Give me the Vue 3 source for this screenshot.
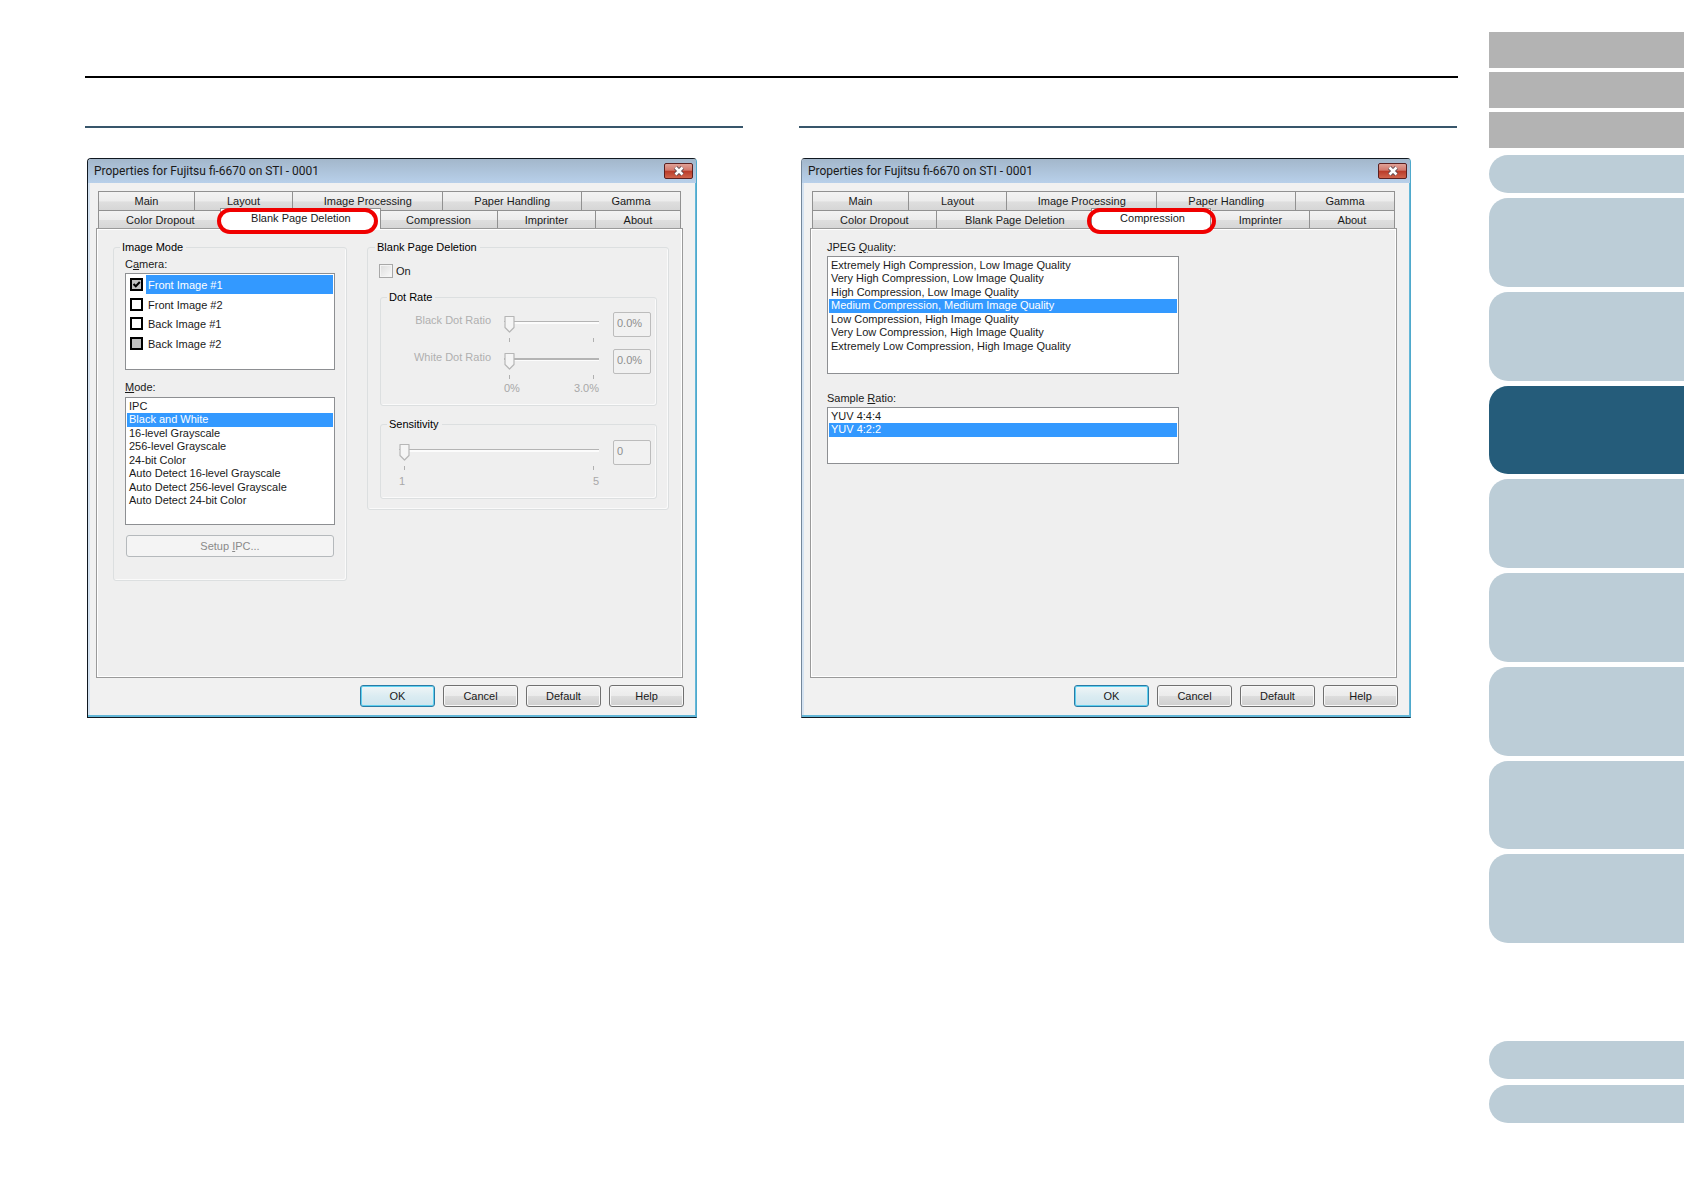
<script setup>
import { ref } from 'vue'

const topTabs = [
  { name: 'Main', size: 96 },
  { name: 'Layout', size: 98 },
  { name: 'Image Processing', size: 151 },
  { name: 'Paper Handling', size: 139 },
  { name: 'Gamma', size: 99 },
]
const bottomTabs = [
  { name: 'Color Dropout', size: 124 },
  { name: 'Blank Page Deletion', size: 158 },
  { name: 'Compression', size: 118 },
  { name: 'Imprinter', size: 98 },
  { name: 'About', size: 85 },
]
const dialogs = [
  { id: 'blank', active: 'Blank Page Deletion' },
  { id: 'compression', active: 'Compression' },
]
const cameras = ref([
  { name: 'Front Image #1', checked: true, grey: true, selected: true },
  { name: 'Front Image #2', checked: false },
  { name: 'Back Image #1', checked: false },
  { name: 'Back Image #2', checked: false, grey: true },
])
const modes = [
  'IPC',
  'Black and White',
  '16-level Grayscale',
  '256-level Grayscale',
  '24-bit Color',
  'Auto Detect 16-level Grayscale',
  'Auto Detect 256-level Grayscale',
  'Auto Detect 24-bit Color',
]
const qualities = [
  'Extremely High Compression, Low Image Quality',
  'Very High Compression, Low Image Quality',
  'High Compression, Low Image Quality',
  'Medium Compression, Medium Image Quality',
  'Low Compression, High Image Quality',
  'Very Low Compression, High Image Quality',
  'Extremely Low Compression, High Image Quality',
]
const ratios = ['YUV 4:4:4', 'YUV 4:2:2']
const mode = ref('Black and White')
const quality = ref('Medium Compression, Medium Image Quality')
const ratio = ref('YUV 4:2:2')
const dots = ['Black Dot Ratio', 'White Dot Ratio']
</script>

<template>
  <div class="page">
    <main class="content">
      <hr class="rule" />
      <div class="columns">
        <section v-for="d in dialogs" :key="d.id" class="column">
          <div class="dialog" :class="d.id">
            <header class="titlebar">
              <span class="title">Properties for Fujitsu fi-6670 on STI - 0001</span>
              <button class="close" type="button" aria-label="Close">
                <svg width="14" height="12" viewBox="0 0 14 12">
                  <path d="M3.5 2.5 10.5 9.5M10.5 2.5 3.5 9.5" stroke="#5a4a50" stroke-width="4.4" />
                  <path d="M3.5 2.5 10.5 9.5M10.5 2.5 3.5 9.5" stroke="#fff" stroke-width="2.6" />
                </svg>
              </button>
            </header>

            <div class="tabs" role="tablist">
              <div class="tabrow">
                <button v-for="t in topTabs" :key="t.name" class="tab" type="button" role="tab" :style="{ flexGrow: t.size }">
                  {{ t.name }}
                </button>
              </div>
              <div class="tabrow lower">
                <button
                  v-for="t in bottomTabs"
                  :key="t.name"
                  class="tab"
                  :class="{ active: t.name === d.active }"
                  type="button"
                  role="tab"
                  :style="{ flexGrow: t.size }"
                >
                  <span class="tabtext">{{ t.name }}</span>
                  <span v-if="t.name === d.active" class="ring"></span>
                </button>
              </div>
            </div>

            <div v-if="d.id === 'blank'" class="panel blank-panel">
              <fieldset class="group image-mode">
                <legend>Image Mode</legend>
                <div class="label">C<u>a</u>mera:</div>
                <ul class="cameras">
                  <li v-for="c in cameras" :key="c.name">
                    <label :class="{ selected: c.selected }">
                      <input v-model="c.checked" type="checkbox" :class="{ grey: c.grey }" />
                      <span>{{ c.name }}</span>
                    </label>
                  </li>
                </ul>
                <label class="label mode-label" for="mode"><u>M</u>ode:</label>
                <select id="mode" v-model="mode" class="list mode-list" size="8">
                  <option v-for="m in modes" :key="m">{{ m }}</option>
                </select>
                <button class="setup" type="button" disabled>Setup <u>I</u>PC...</button>
              </fieldset>

              <fieldset class="group deletion">
                <legend>Blank Page Deletion</legend>
                <label class="switch"><input type="checkbox" /><span>On</span></label>

                <fieldset class="group inner">
                  <legend>Dot Rate</legend>
                  <div v-for="(name, i) in dots" :key="name" class="slide-row">
                    <label :for="'dot' + i">{{ name }}</label>
                    <div class="slider">
                      <input :id="'dot' + i" type="range" min="0" max="3" value="0" disabled />
                      <div class="ticks"><i></i><i></i></div>
                    </div>
                    <input class="value" type="text" value="0.0%" :aria-label="name" disabled />
                  </div>
                  <div class="scale"><span>0%</span><span>3.0%</span></div>
                </fieldset>

                <fieldset class="group inner sensitivity">
                  <legend>Sensitivity</legend>
                  <div class="slide-row">
                    <div class="slider wide">
                      <input type="range" min="1" max="5" value="1" aria-label="Sensitivity" disabled />
                      <div class="ticks"><i></i><i></i></div>
                    </div>
                    <input class="value" type="text" value="0" aria-label="Sensitivity" disabled />
                  </div>
                  <div class="scale wide"><span>1</span><span>5</span></div>
                </fieldset>
              </fieldset>
            </div>

            <div v-else class="panel compression-panel">
              <label class="label" for="quality">JPEG <u>Q</u>uality:</label>
              <select id="quality" v-model="quality" class="list quality-list" size="7">
                <option v-for="q in qualities" :key="q">{{ q }}</option>
              </select>
              <label class="label ratio-label" for="ratio">Sample <u>R</u>atio:</label>
              <select id="ratio" v-model="ratio" class="list ratio-list" size="2">
                <option v-for="r in ratios" :key="r">{{ r }}</option>
              </select>
            </div>

            <footer class="actions">
              <button class="action primary" type="button">OK</button>
              <button class="action" type="button">Cancel</button>
              <button class="action" type="button">Default</button>
              <button class="action" type="button">Help</button>
            </footer>
          </div>
        </section>
      </div>
    </main>

    <nav class="side">
      <div class="greys"><div v-for="n in 3" :key="n"></div></div>
      <div class="pill"></div>
      <div class="chapters">
        <div v-for="n in 8" :key="n" :class="{ current: n === 3 }"></div>
      </div>
      <div class="pills">
        <div class="pill"></div>
        <div class="pill"></div>
      </div>
    </nav>
  </div>
</template>

<style>
body {
  margin: 0;
  background: #fff;
}
</style>

<style scoped>
* {
  box-sizing: border-box;
}
.page {
  display: flex;
  min-height: 100vh;
  font: 11px/14px 'Liberation Sans', Arial, sans-serif;
  color: #1a1a1a;
}
button,
input,
select {
  font: inherit;
  color: inherit;
  margin: 0;
}
.content {
  flex: 1;
  min-width: 0;
  padding: 76px 31px 0 85px;
}
.rule {
  height: 2px;
  margin: 0 0 48px;
  border: 0;
  background: #000;
}
.columns {
  display: grid;
  grid-template-columns: 1fr 1fr;
  gap: 56px;
  margin-right: 1px;
}
.column {
  border-top: 2px solid #38566b;
  padding: 30px 2px 0;
}

/* dialog window */
.dialog {
  width: 100%;
  max-width: 610px;
  padding-bottom: 8px;
  border: 1px solid #101820;
  border-right-color: #4fa9cc;
  border-radius: 4px 4px 0 0;
  background: #f1f1f1;
  box-shadow: inset -1px -2px 0 #63b7d8, inset 2px 0 0 #d5e3f1;
}
.dialog.compression {
  border-left-color: #74879b;
}
.titlebar {
  display: flex;
  align-items: center;
  justify-content: space-between;
  height: 24px;
  padding: 0 3px 0 6px;
  border-radius: 3px 3px 0 0;
  background: linear-gradient(#a3b7cb, #b8d0ea);
}
.title {
  font: 12px/20px Roboto, 'Noto Sans', sans-serif;
}
.close {
  display: flex;
  align-items: center;
  justify-content: center;
  width: 29px;
  height: 16px;
  padding: 0;
  border: 1px solid #5b2020;
  border-radius: 2px;
  background: linear-gradient(#e0a297 0, #d2796c 45%, #b93a28 50%, #d0644c 100%);
}

/* tabs */
.tabs {
  margin: 8px 15px 0 10px;
}
.tabrow {
  display: flex;
  height: 19px;
  border-left: 1px solid #919191;
}
.lower {
  height: 18px;
}
.tab {
  position: relative;
  flex: 1 1 0;
  min-width: 0;
  padding: 0;
  border: 0;
  border-top: 1px solid #919191;
  border-right: 1px solid #919191;
  background: linear-gradient(#f3f3f3 0, #ececec 50%, #dedede 55%, #d6d6d6 100%);
  white-space: nowrap;
}
.tab.active {
  border-color: transparent;
  background: none;
  z-index: 1;
}
.tab.active::before {
  content: '';
  position: absolute;
  inset: -3px -2px -1px -3px;
  border: 1px solid #919191;
  border-bottom: 0;
  background: #fff;
}
.tabtext {
  position: relative;
}
.active .tabtext {
  bottom: 2px;
}
.ring {
  position: absolute;
  inset: -3px 1px -6px -6px;
  border: 4px solid #f00000;
  border-radius: 13px;
}
.compression .ring {
  right: -5px;
  left: -7px;
}
.compression .tab.active::before {
  right: 0;
}
.panel {
  height: 450px;
  margin: 0 13px 0 8px;
  border: 1px solid #9a9a9a;
  background: #efefef;
  box-shadow: inset 1px 1px 0 #fff, inset -1px -1px 0 #fff;
}
.blank-panel {
  display: flex;
  align-items: flex-start;
  gap: 20px;
  padding: 11px 13px 0 16px;
}
.compression-panel {
  display: flex;
  flex-direction: column;
  align-items: flex-start;
  padding: 11px 16px 0;
}

/* group boxes */
.group {
  min-width: 0;
  margin: 0;
  border: 1px solid #dcdfe0;
  border-radius: 3px;
  box-shadow: inset -1px -1px 0 #fafafa;
}
.group legend {
  margin: 0;
  padding: 0 3px 0 2px;
  color: #000;
}
.image-mode {
  display: flex;
  flex-direction: column;
  flex: 0 1 234px;
  height: 341px;
  padding: 3px 11px 0;
}
.image-mode legend,
.deletion > legend {
  margin-left: -5px;
}
.deletion {
  flex: 1;
  height: 270px;
  padding: 10px 11px 0 12px;
}
.label {
  display: block;
  height: 14px;
}
.cameras {
  display: flex;
  flex-direction: column;
  height: 97px;
  margin: 2px 0 0;
  padding: 1px 1px 16px 4px;
  list-style: none;
  border: 1px solid #8d8f92;
  background: #fff;
}
.cameras li {
  display: flex;
  flex: 1;
}
.cameras label {
  display: flex;
  flex: 1;
  align-items: center;
  gap: 3px;
}
.cameras span {
  flex: 1;
  padding: 3px 2px 2px;
}
.cameras .selected span {
  background: #3399ff;
  color: #fff;
}
.cameras input {
  appearance: none;
  width: 13px;
  height: 13px;
  border: 2px solid #000;
  background: #fff;
}
.cameras .grey {
  background: #c0c0c0;
}
.cameras input:checked {
  background: #c0c0c0 url("data:image/svg+xml,%3Csvg xmlns='http://www.w3.org/2000/svg' viewBox='0 0 9 9'%3E%3Cpath d='M1.5 4 3.8 6.3 7.8 2' fill='none' stroke='%23000' stroke-width='2'/%3E%3C/svg%3E");
}
.mode-label {
  margin-top: 10px;
}
.list {
  display: block;
  padding: 2px 1px 1px;
  overflow: hidden;
  border: 1px solid #8d8f92;
  border-radius: 0;
  background: #fff;
  color: #1a1a1a;
  outline: 0;
}
.list option {
  height: 13px;
  min-height: 13px;
  padding: 0 2px;
  line-height: 13px;
}
.list option:nth-child(even) {
  height: 14px;
}
.list option:checked {
  background: linear-gradient(#3399ff, #3399ff);
  -webkit-text-fill-color: #fff;
}
.mode-list {
  width: 100%;
  height: 128px;
  margin-top: 3px;
}
.setup {
  height: 22px;
  margin: 10px 1px 0;
  padding: 0;
  border: 1px solid #b5b9bc;
  border-radius: 3px;
  background: #f4f4f4;
  color: #8a8a8a;
}
.switch {
  display: flex;
  align-items: center;
  gap: 3px;
  height: 14px;
  margin-left: -1px;
}
.switch input {
  appearance: none;
  width: 14px;
  height: 14px;
  border: 1px solid #a8a8a8;
  background: linear-gradient(135deg, #dcdcdc, #fafafa);
  box-shadow: inset 0 0 0 1px #f4f4f4;
}

/* sliders */
.inner {
  height: 116px;
  margin-top: 12px;
  padding: 8px 5px 0;
}
.inner legend {
  margin-left: 1px;
}
.sensitivity {
  height: 82px;
  margin-top: 11px;
  padding-top: 9px;
}
.slide-row {
  display: flex;
  justify-content: flex-end;
  height: 25px;
  margin-bottom: 12px;
  color: #b0b0b0;
}
.slide-row label {
  margin-right: 13px;
  line-height: 17px;
}
.slider {
  width: 95px;
  margin-right: 14px;
}
.slider input {
  appearance: none;
  display: block;
  width: 100%;
  height: 18px;
  margin-top: 3px;
  background: linear-gradient(#b4b4b4 0 50%, #fcfcfc 50%) 0 6px / 100% 3px no-repeat;
}
.slider input::-webkit-slider-thumb {
  appearance: none;
  width: 11px;
  height: 18px;
  background: url("data:image/svg+xml,%3Csvg xmlns='http://www.w3.org/2000/svg' viewBox='0 0 11 18'%3E%3Cpath d='M1 1.5h9v11L5.500 17 1 12.500z' fill='%23f5f5f5' stroke='%23b6b6b6' stroke-width='1.200' stroke-linejoin='round'/%3E%3C/svg%3E");
}
.ticks {
  display: flex;
  justify-content: space-between;
  padding: 5px 5px 0;
}
.ticks i {
  width: 1px;
  height: 4px;
  background: #b0b0b0;
}
.value {
  width: 38px;
  height: 25px;
  padding: 0 3px 3px;
  border: 1px solid #bcbcbc;
  border-radius: 2px;
  background: #f1f1f1;
  color: #8e8e8e;
}
.scale {
  display: flex;
  justify-content: space-between;
  width: 95px;
  margin: -5px 52px 0 auto;
  color: #a8a8a8;
}
.wide {
  width: 200px;
}
.scale.wide {
  margin-top: -3px;
}

/* compression tab */
.quality-list {
  width: 352px;
  height: 118px;
  margin-top: 2px;
}
.ratio-label {
  margin-top: 17px;
}
.ratio-list {
  width: 352px;
  height: 57px;
  margin-top: 2px;
}

/* bottom buttons */
.actions {
  display: flex;
  justify-content: flex-end;
  gap: 8px;
  margin: 7px 12px 0;
  padding-bottom: 2px;
}
.action {
  width: 75px;
  height: 22px;
  padding: 0;
  border: 1px solid #707070;
  border-radius: 3px;
  background: linear-gradient(#f3f3f3 0, #ebebeb 50%, #dddddd 50%, #cfcfcf 100%);
  box-shadow: inset 0 0 0 1px #f8f8f8;
}
.primary {
  border-color: #2a7ba5;
  background: linear-gradient(#f0f5f7, #dbecf2 50%, #cfe5ee);
  box-shadow: inset 0 0 0 1px #5fd0f0;
}

/* right side index */
.side {
  flex: 0 0 195px;
  display: flex;
  flex-direction: column;
  padding: 32px 0 67px;
}
.greys {
  display: grid;
  gap: 4px;
  margin-bottom: 7px;
}
.greys div {
  height: 36px;
  background: #b3b3b3;
}
.pill {
  height: 38px;
  border-radius: 19px 0 0 19px;
  background: #bccdd7;
}
.chapters {
  display: grid;
  grid-template-rows: repeat(8, 1fr);
  gap: 5px;
  height: 745px;
  margin-top: 5px;
}
.chapters div {
  border-radius: 19px 0 0 19px;
  background: #bccdd7;
}
.chapters .current {
  background: #255c7a;
}
.pills {
  display: grid;
  gap: 6px;
  margin-top: auto;
}
</style>
